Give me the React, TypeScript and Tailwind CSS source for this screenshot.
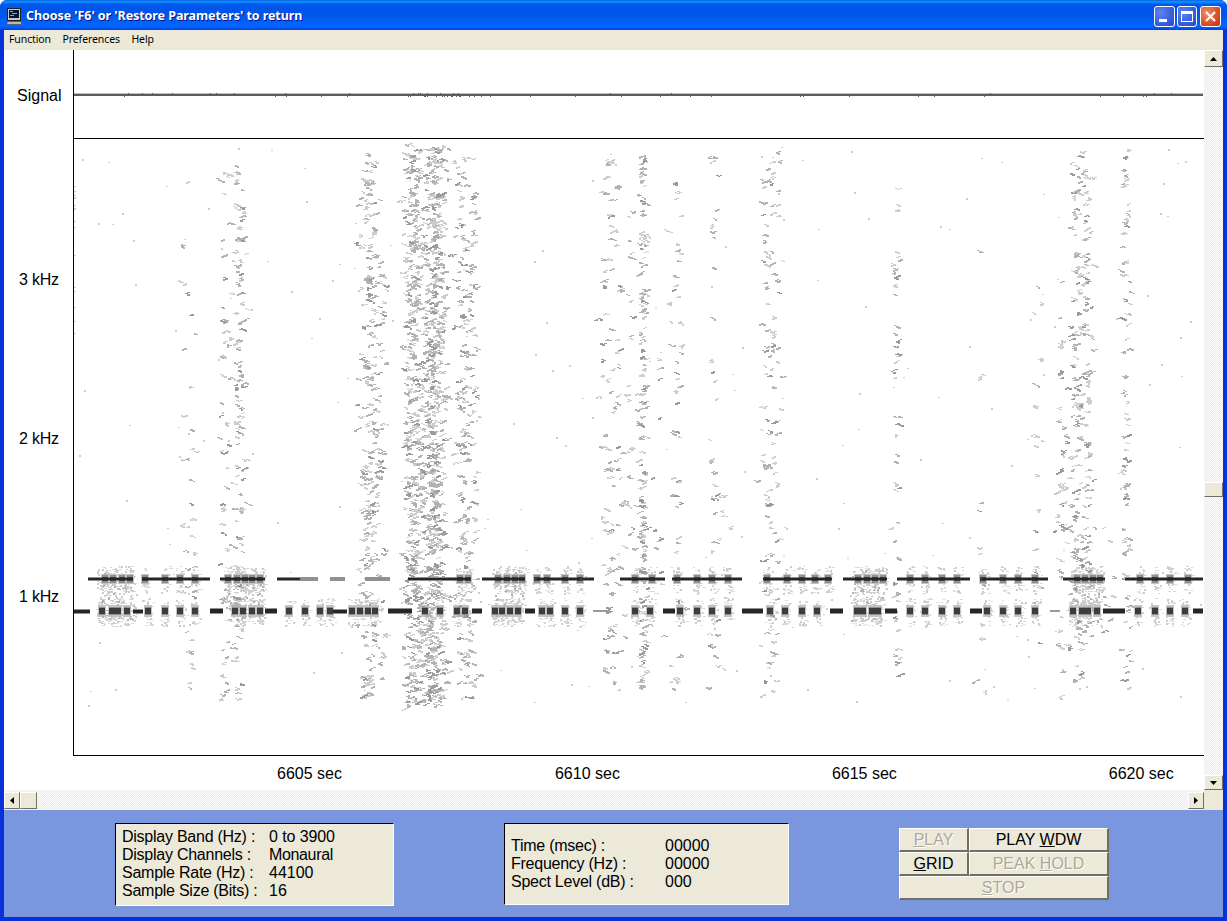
import React, { useMemo } from "react";

function rng(seed: number) {
  let a = seed;
  return () => {
    a |= 0; a = (a + 0x6d2b79f5) | 0;
    let t = Math.imul(a ^ (a >>> 15), 1 | a);
    t = (t + Math.imul(t ^ (t >>> 7), 61 | t)) ^ t;
    return ((t ^ (t >>> 14)) >>> 0) / 4294967296;
  };
}

type Band = [number, number, number, number, number];
// center x, sigma, y top, y bottom, mark count
const BANDS: Band[] = [
  [187, 3, 240, 700, 22], [192, 3, 440, 690, 14],
  [224, 3, 165, 700, 55], [238, 3, 155, 700, 130],
  [368, 5, 150, 696, 230], [380, 4, 230, 690, 45],
  [409, 3, 142, 708, 250], [417, 3, 145, 706, 230], [426, 2.5, 145, 706, 130], [433, 3, 145, 706, 400], [441, 3, 146, 705, 150],
  [461, 3, 148, 700, 115], [470, 3.5, 150, 700, 115],
  [606, 3, 155, 680, 60], [616, 3, 155, 700, 48], [629, 3, 200, 680, 26],
  [642, 1.5, 145, 690, 170], [656, 3, 350, 660, 12],
  [676, 3, 180, 690, 48], [712, 2.5, 148, 690, 34], [720, 3, 450, 680, 12],
  [767, 4, 150, 700, 85], [777, 3, 150, 660, 34],
  [895, 1.5, 180, 680, 50], [980, 1.5, 200, 700, 12],
  [1037, 2, 280, 660, 18], [1060, 3, 280, 700, 48],
  [1076, 3.5, 150, 690, 145], [1087, 3, 150, 640, 105], [1126, 2, 150, 692, 90], [1110, 3, 500, 640, 8],
];

const TOP_SPANS: [number, number, number][] = [
  [88, 133, 1], [142, 210, 1], [220, 265, 1], [277, 300, 0.8], [300, 318, 0.45], [330, 345, 0.4], [365, 390, 0.6],
  [408, 470, 1], [482, 525, 1], [537, 580, 1], [583, 594, 0.9], [620, 665, 1], [672, 742, 1], [763, 832, 1],
  [843, 887, 1], [897, 970, 1], [982, 1048, 1], [1063, 1105, 0.8], [1125, 1203, 1],
];
const BOTTOM_SPANS: [number, number, number][] = [
  [74, 90, 1], [133, 143, 1], [210, 223, 1.2], [265, 277, 1.2], [333, 347, 0.8], [388, 412, 1.2], [472, 482, 1.2],
  [525, 535, 1.2], [593, 610, 0.5], [663, 675, 1.2], [742, 763, 1.2], [830, 843, 1.2], [885, 897, 1.2], [970, 982, 1.2],
  [1050, 1060, 0.6], [1103, 1125, 1.2], [1193, 1203, 1.2],
];
const TOP_KNOTS = [105, 113, 122, 130, 145, 165, 180, 195, 228, 237, 245, 252, 260, 460, 468, 498, 507, 515, 522, 537, 547, 565, 580, 635, 652, 677, 697, 712, 728, 767, 787, 802, 815, 828, 858, 867, 875, 883, 910, 925, 942, 957, 983, 1003, 1018, 1035, 1077, 1085, 1093, 1100, 1140, 1155, 1170, 1188];
const BOTTOM_KNOTS = [102, 112, 118, 127, 148, 165, 180, 195, 235, 243, 252, 260, 289, 305, 320, 330, 352, 360, 368, 375, 425, 440, 457, 465, 495, 502, 510, 518, 542, 550, 565, 580, 635, 650, 680, 697, 712, 728, 770, 785, 802, 817, 857, 863, 872, 878, 910, 925, 942, 957, 987, 1003, 1018, 1035, 1073, 1082, 1088, 1097, 1138, 1155, 1170, 1185];
const BURSTS: [number, number][] = [[100, 133], [496, 525], [855, 887], [1073, 1103], [228, 262]];

function buildSpectrogram() {
  const r = rng(77);
  const gauss = () => (r() + r() + r() + r() - 2) * 1.7;
  const levels = ["", "", "", ""];
  let faint = "";
  let soft = "";
  const add = (l: number, x: number, y: number, w: number, h: number) => {
    levels[l] += `M${Math.round(x)} ${Math.round(y)}h${w}v${h}h${-w}z`;
  };
  BANDS.forEach(([cx, s, y0, y1, n]) => {
    for (let i = 0; i < n; i++) {
      let x = cx + gauss() * s;
      let y = y0 + r() * (y1 - y0);
      const len = 2 + Math.floor(r() * 3);
      const p = r();
      const l = p < 0.45 ? 0 : p < 0.85 ? 1 : 2;
      for (let k = 0; k < len; k++) {
        add(l, x, y, 2 + Math.floor(r() * 2), 1 + Math.floor(r() * 2));
        x += r() < 0.5 ? 2 : -2;
        y += r() < 0.5 ? 1 : -1;
      }
    }
  });
  // sparse background specks
  for (let i = 0; i < 240; i++) {
    add(0, 75 + r() * 1125, 145 + r() * 560, 2, 1 + Math.floor(r() * 2));
  }
  for (let i = 0; i < 16; i++) add(0, 74, 185 + r() * 170, 2, 1);
  // textured halo round the keyed tones
  const streak = (k: number, y0: number, y1: number) => {
    for (let i = 0; i < 22; i++) {
      const x = Math.round(k + gauss() * 2.4);
      const y = Math.round(y0 + r() * (y1 - y0));
      faint += `M${x} ${y}h${2 + Math.floor(r() * 3)}v1h-${2}z`;
    }
    for (let i = 0; i < 9; i++) add(0, k + gauss() * 2.4, y0 + r() * (y1 - y0), 2, 2);
  };
  TOP_KNOTS.forEach((k) => streak(k, 566, 593));
  BOTTOM_KNOTS.forEach((k) => streak(k, 598, 626));
  BURSTS.forEach(([a, b]) => {
    for (let x = a; x < b; x += 8) {
      for (let i = 0; i < 38; i++) add(r() < 0.75 ? 0 : 1, x + gauss() * 2.2, 569 + r() * 52, 2, 1 + Math.floor(r() * 2));
    }
  });
  // tones
  let haloes = "";
  let cores = "";
  const span = (a: number, b: number, y: number, h: number) => `M${a} ${y}H${b}v${h}H${a}z`;
  TOP_SPANS.forEach(([a, b, o]) => {
    if (o >= 0.8) cores += span(a, b, 578, 2);
    else levels[2] += span(a, b, 578, 2);
    haloes += span(a, b, 577, 4);
  });
  BOTTOM_SPANS.forEach(([a, b, o]) => {
    if (o > 1) { cores += span(a, b, 609, 4); haloes += span(a, b, 608, 6); }
    else if (o >= 0.8) { cores += span(a, b, 610, 3); haloes += span(a, b, 609, 5); }
    else levels[2] += span(a, b, 610, 2);
  });
  TOP_KNOTS.forEach((k) => {
    soft += span(k - 4, k + 4, 574, 10);
    haloes += span(k - 3, k + 3, 575, 8);
    levels[3] += span(k - 3, k + 3, 577, 4);
  });
  BOTTOM_KNOTS.forEach((k) => {
    soft += span(k - 4, k + 4, 605, 12);
    haloes += span(k - 3, k + 3, 607, 8);
    levels[3] += span(k - 3, k + 3, 608, 6);
  });

  let sig = "M74 94H1203v2H74z";
  for (let i = 0; i < 60; i++) {
    const x = Math.round(i < 16 ? 400 + r() * 75 : 105 + r() * 1090);
    sig += `M${x} ${r() < 0.5 ? 93 : 96}h${1 + Math.floor(r() * 2)}v1h-1z`;
  }
  return { levels, haloes, cores, sig, faint, soft };
}

const LABEL = "font-['Liberation_Sans',sans-serif] text-[16px] leading-[18px] text-black whitespace-nowrap";

function Arrow({ dir }: { dir: "up" | "down" | "left" | "right" }) {
  const pts = { up: "0,4 7,4 3.5,0", down: "0,0 7,0 3.5,4", left: "4,0 4,7 0,3.5", right: "0,0 0,7 4,3.5" }[dir];
  const vertical = dir === "up" || dir === "down";
  return (
    <svg width={vertical ? 7 : 4} height={vertical ? 4 : 7} viewBox={vertical ? "0 0 7 4" : "0 0 4 7"}>
      <polygon points={pts} fill="#000" />
    </svg>
  );
}

function ScrollBtn({ dir, className }: { dir: "up" | "down" | "left" | "right"; className: string }) {
  return (
    <div className={"flex items-center justify-center shrink-0 bg-[#ece9d8] border border-t-white border-l-white border-r-[#716f64] border-b-[#716f64] " + className}>
      <Arrow dir={dir} />
    </div>
  );
}

function Btn({ children, disabled, className }: { children: React.ReactNode; disabled?: boolean; className: string }) {
  return (
    <div
      className={
        "h-[24px] flex items-center justify-center bg-[#ece9d8] border-t border-l border-t-white border-l-white border-r-2 border-b-2 border-r-[#716f64] border-b-[#716f64] font-['Liberation_Sans',sans-serif] text-[16px] " +
        (disabled ? "text-[#aca899] [text-shadow:1px_1px_0_#ffffff] " : "text-black ") +
        className
      }
    >
      <span>{children}</span>
    </div>
  );
}

function InfoRow({ k, v, w, vc }: { k: string; v: string; w: string; vc?: string }) {
  return (
    <div className="flex h-[18px] items-center">
      <span className={LABEL + " tracking-[-0.25px] " + w}>{k}</span>
      <span className={LABEL + " " + (vc || "")}>{v}</span>
    </div>
  );
}

export default function App() {
  const s = useMemo(buildSpectrogram, []);
  const track = "bg-[repeating-conic-gradient(#ece9d8_0_25%,#ffffff_0_50%)] bg-[length:2px_2px]";
  return (
    <div className="w-[1227px] h-[921px] flex flex-col overflow-hidden rounded-t-[7px] bg-[#0831d9]">
      {/* title bar */}
      <div className="h-[30px] shrink-0 flex items-center pl-[6px] pr-[6px] bg-[linear-gradient(180deg,#0a5fe0_0%,#0997ff_6%,#0058ee_14%,#0054e8_45%,#0066ff_85%,#005bff_92%,#003dd7_100%)]">
        <svg width="16" height="17" viewBox="0 0 16 17" className="shrink-0 mt-[3px]">
          <rect x="1.5" y="0.5" width="13" height="12" fill="#c8c8c8" stroke="#222" />
          <rect x="3" y="2" width="10" height="8" fill="#001830" />
          <path d="M4 3h3v1H4zM6 5h5v1H6zM4 7h4v1H4z" fill="#22d3ee" />
          <rect x="1" y="13.5" width="14.5" height="3" fill="#b8b8b8" stroke="#444" strokeWidth="0.6" />
        </svg>
        <span className="ml-[4px] mt-[3px] font-['Noto_Sans',sans-serif] font-bold text-[12.5px] tracking-[-0.07px] text-white whitespace-nowrap [text-shadow:1px_1px_0_#0f1089]">
          Choose 'F6' or 'Restore Parameters' to return
        </span>
        <div className="ml-auto flex items-center pt-[3px]">
          <div className="w-[21px] h-[21px] rounded-[3px] border border-white flex items-end pl-[4px] pb-[4px] bg-[radial-gradient(circle_at_30%_30%,#5b84f0,#2a4fd0_85%)]">
            <div className="w-[8px] h-[3px] bg-white" />
          </div>
          <div className="w-[20px] h-[21px] ml-[2px] rounded-[3px] border border-white flex items-center justify-center bg-[radial-gradient(circle_at_30%_30%,#5b84f0,#2a4fd0_85%)]">
            <div className="w-[12px] h-[11px] border border-white border-t-[3px]" />
          </div>
          <div className="w-[21px] h-[21px] ml-[3px] rounded-[3px] border border-white flex items-center justify-center bg-[radial-gradient(circle_at_30%_30%,#ee8a68,#c93a14_85%)]">
            <svg width="11" height="11" viewBox="0 0 11 11">
              <path d="M1 1l9 9M10 1l-9 9" stroke="#fff" strokeWidth="2.2" />
            </svg>
          </div>
        </div>
      </div>

      <div className="flex-1 flex flex-col pl-[4px] pr-[4px] pb-[4px] min-h-0">
        {/* menu */}
        <div className="h-[20px] shrink-0 bg-[#ece9d8] flex items-center pl-[5px] gap-[11.5px] font-['Noto_Sans',sans-serif] text-[10.5px] tracking-[-0.1px] text-black">
          <span>Function</span>
          <span>Preferences</span>
          <span>Help</span>
        </div>

        {/* work area */}
        <div className="h-[740px] shrink-0 flex bg-white">
          <div className="w-[1200px] shrink-0 flex flex-col">
            <div className="h-[706px] flex">
              <div className="w-[69px] shrink-0 flex flex-col">
                <div className={LABEL + " mt-[37px] pl-[13px]"}>Signal</div>
                <div className={LABEL + " tracking-[-0.2px] mt-[166px] pl-[15px]"}>3 kHz</div>
                <div className={LABEL + " tracking-[-0.2px] mt-[141px] pl-[15px]"}>2 kHz</div>
                <div className={LABEL + " tracking-[-0.2px] mt-[140px] pl-[15px]"}>1 kHz</div>
              </div>
              <div className="flex-1 flex flex-col border-l border-black border-b min-w-0">
                <div className="h-[89px] shrink-0 border-b border-black">
                  <svg width="1130" height="88" viewBox="74 50 1130 88" className="block" shapeRendering="crispEdges">
                    <path d="M74 93H1203v1H74z" fill="#bdbdbd" />
                    <path d={s.sig} fill="#5c5c5c" />
                  </svg>
                </div>
                <svg width="1130" height="616" viewBox="74 139 1130 616" className="block" shapeRendering="crispEdges">
                  <path d={s.faint} fill="#dadada" />
                  <path d={s.levels[0]} fill="#cdcdcd" />
                  <path d={s.soft} fill="#c4c4c4" />
                  <path d={s.levels[1]} fill="#b2b2b2" />
                  <path d={s.levels[2]} fill="#9a9a9a" />
                  <path d={s.haloes} fill="#909090" />
                  <path d={s.levels[3]} fill="#3c3c3c" />
                  <path d={s.cores} fill="#262626" />
                </svg>
              </div>
            </div>
            <div className="h-[34px] flex items-center pt-[1px]">
              <span className={LABEL + " ml-[273px]"}>6605 sec</span>
              <span className={LABEL + " ml-[213px]"}>6610 sec</span>
              <span className={LABEL + " ml-[212px]"}>6615 sec</span>
              <span className={LABEL + " ml-[212px]"}>6620 sec</span>
            </div>
          </div>
          {/* vertical scrollbar */}
          <div className={"w-[19px] shrink-0 flex flex-col " + track}>
            <ScrollBtn dir="up" className="h-[17px]" />
            <div className="flex-1">
              <div className="mt-[415px] h-[15px] bg-[#ece9d8] border border-t-white border-l-white border-r-[#716f64] border-b-[#716f64]" />
            </div>
            <ScrollBtn dir="down" className="h-[15px]" />
          </div>
        </div>

        {/* horizontal scrollbar */}
        <div className="h-[20px] shrink-0 flex bg-[#ece9d8]">
          <div className={"w-[1200px] shrink-0 flex items-center " + track}>
            <ScrollBtn dir="left" className="w-[16px] h-[17px]" />
            <div className="w-[17px] h-[17px] bg-[#ece9d8] border border-t-white border-l-white border-r-[#716f64] border-b-[#716f64]" />
            <div className="flex-1" />
            <ScrollBtn dir="right" className="w-[16px] h-[17px]" />
          </div>
        </div>

        {/* status panel */}
        <div className="flex-1 bg-[#7a96df] flex items-start pl-[111px] pt-[13px]">
          <div className="w-[279px] h-[83px] bg-[#ece9d8] border-t border-l border-t-black border-l-black border-r border-b border-r-white border-b-white pl-[6px] pt-[4px]">
            <InfoRow k="Display Band (Hz) :" v="0 to 3900" w="w-[147px]" vc="tracking-[-0.1px]" />
            <InfoRow k="Display Channels :" v="Monaural" w="w-[147px]" vc="tracking-[-0.35px]" />
            <InfoRow k="Sample Rate (Hz) :" v="44100" w="w-[147px]" />
            <InfoRow k="Sample Size (Bits) :" v="16" w="w-[147px]" />
          </div>
          <div className="ml-[110px] w-[285px] h-[82px] bg-[#ece9d8] border-t border-l border-t-black border-l-black border-r border-b border-r-white border-b-white pl-[6px] pt-[13px]">
            <InfoRow k="Time (msec) :" v="00000" w="w-[154px]" />
            <InfoRow k="Frequency (Hz) :" v="00000" w="w-[154px]" />
            <InfoRow k="Spect Level (dB) :" v="000" w="w-[154px]" />
          </div>
          <div className="ml-[110px] mt-[5px] w-[210px] flex flex-col">
            <div className="flex">
              <Btn disabled className="w-[70px]"><u>P</u>LAY</Btn>
              <Btn className="flex-1">PLAY <u>W</u>DW</Btn>
            </div>
            <div className="flex">
              <Btn className="w-[70px]"><u>G</u>RID</Btn>
              <Btn disabled className="flex-1">PEAK <u>H</u>OLD</Btn>
            </div>
            <Btn disabled className="w-full"><u>S</u>TOP</Btn>
          </div>
        </div>
      </div>
    </div>
  );
}
